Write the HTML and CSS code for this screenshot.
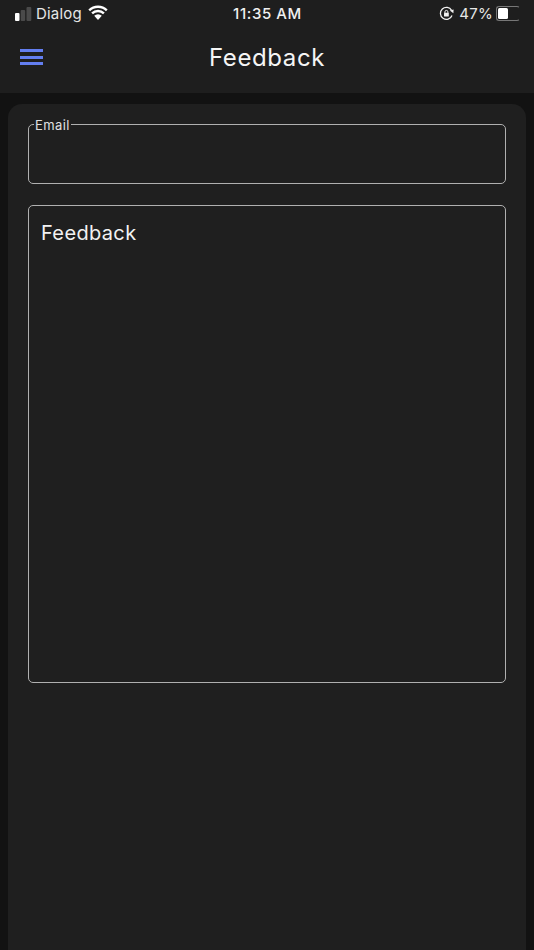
FILE: index.html
```html
<!DOCTYPE html>
<html lang="en">
<head>
<meta charset="utf-8">
<title>Feedback</title>
<link rel="stylesheet" href="styles.css">
</head>
<body>
<header class="top">
  <div class="status">
    <div class="status-left">
      <svg class="signal" width="17" height="14" viewBox="0 0 17 14"><rect x="0" y="6" width="4.500" height="8" rx="1" fill="#fff"/><rect x="5.700" y="3" width="4.500" height="11" rx="1" fill="#4a4a4a"/><rect x="11.500" y="0" width="4.800" height="14" rx="1" fill="#4a4a4a"/></svg>
      <span class="carrier">Dialog</span>
      <svg class="wifi" width="20" height="15" viewBox="0 0 20 15"><path d="M1.200 5.400a12.600 12.600 0 0 1 17.600 0M4.100 8.400a8.400 8.400 0 0 1 11.800 0" fill="none" stroke="#fff" stroke-width="2.400"/><path d="M10 15L6.200 10.800a5.400 5.400 0 0 1 7.600 0z" fill="#fff"/></svg>
    </div>
    <span class="clock">11:35 AM</span>
    <div class="status-right">
      <svg class="lock" width="15" height="15" viewBox="0 0 15 15"><path d="M12.600 4.300A6 6 0 1 0 13 9.500" fill="none" stroke="#f2f2f2" stroke-width="1.300"/><path d="M10.800 4.500l3.800-1.100-.2 3.800z" fill="#f2f2f2"/><rect x="5" y="6.700" width="4.800" height="3.800" rx=".6" fill="#f2f2f2"/><path d="M5.900 7V5.900a1.500 1.500 0 0 1 3 0V7" fill="none" stroke="#f2f2f2"/></svg>
      <span class="percent">47%</span>
      <div class="battery"><span class="battery-fill"></span></div>
    </div>
  </div>
  <div class="bar">
    <button class="menu" aria-label="Menu"><span></span><span></span><span></span></button>
    <h1>Feedback</h1>
  </div>
</header>
<main class="card">
  <fieldset class="field email">
    <legend>Email</legend>
  </fieldset>
  <div class="field feedback">Feedback</div>
</main>
</body>
</html>
```
FILE: styles.css
```css
* { box-sizing: border-box; }
html, body { height: 100%; }
body {
  margin: 0;
  height: 950px;
  overflow: hidden;
  background: #121212;
  color: #f2f2f2;
  font-family: Inter, "Noto Sans", sans-serif;
  display: flex;
  flex-direction: column;
}
.top {
  height: 93px;
  background: #1e1e1e;
  flex: none;
}
.status {
  height: 27px;
  padding: 0 14px 0 15px;
  display: grid;
  grid-template-columns: 1fr auto 1fr;
  align-items: center;
  font-size: 15px;
}
.status-left, .status-right { display: flex; align-items: center; }
.status-right { justify-content: flex-end; }
.signal { margin-right: 4px; }
.carrier { margin-right: 6px; color: #e6e6e6; letter-spacing: .2px; }
.wifi { margin-top: -2px; }
.clock { font-weight: 500; letter-spacing: .6px; color: #f0f0f0; }
.lock { margin-right: 5px; }
.percent { margin-right: 3px; color: #e6e6e6; letter-spacing: .3px; }
.battery {
  width: 24px;
  height: 15px;
  border: 1.500px solid #777;
  border-right-color: transparent;
  border-radius: 3px;
  padding: 1px;
}
.battery-fill {
  display: block;
  width: 10px;
  height: 100%;
  background: #fff;
  border-radius: 1.500px;
}
.bar {
  height: 59px;
  padding-top: 1px;
  padding-left: 20px;
  display: flex;
  align-items: center;
}
.menu {
  width: 23px;
  padding: 0;
  border: 0;
  background: none;
  display: flex;
  flex-direction: column;
  gap: 3.400px;
}
.menu span {
  display: block;
  height: 3px;
  background: #637ef0;
}
h1 {
  margin: 0;
  flex: 1;
  padding-right: 43px;
  text-align: center;
  font-size: 24px;
  font-weight: 400;
  letter-spacing: .6px;
  color: #f5f5f5;
}
.card {
  flex: 1;
  margin: 11px 8px 0;
  padding: 13px 20px 0;
  background: #1f1f1f;
  border-radius: 14px 14px 0 0;
  display: flex;
  flex-direction: column;
  gap: 21px;
}
.field {
  margin: 0;
  border: 1px solid #b0b0b0;
  border-radius: 5px;
  width: 478px;
}
.email {
  height: 67px;
  padding: 0 0 0 5px;
}
.email legend {
  padding: 2px 1px 0;
  font-size: 13px;
  line-height: 1;
  letter-spacing: .4px;
  color: #e0e0e0;
}
.feedback {
  height: 478px;
  padding: 14px 12px;
  font-size: 20px;
  line-height: 26px;
  letter-spacing: .35px;
  color: #f2f2f2;
}
```
